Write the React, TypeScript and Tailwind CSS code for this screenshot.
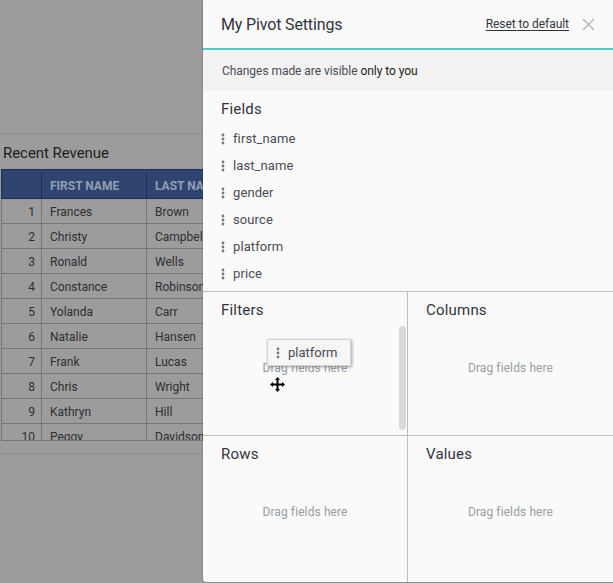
const ROWS = [
  ["1", "Frances", "Brown"],
  ["2", "Christy", "Campbell"],
  ["3", "Ronald", "Wells"],
  ["4", "Constance", "Robinson"],
  ["5", "Yolanda", "Carr"],
  ["6", "Natalie", "Hansen"],
  ["7", "Frank", "Lucas"],
  ["8", "Chris", "Wright"],
  ["9", "Kathryn", "Hill"],
  ["10", "Peggy", "Davidson"],
];

const FIELDS = ["first_name", "last_name", "gender", "source", "platform", "price"];

const Grip = () => (
  <svg width="4" height="12" viewBox="0 0 4 12" className="shrink-0 fill-[#77777f]">
    <circle cx="2" cy="2" r="1.4" />
    <circle cx="2" cy="6" r="1.4" />
    <circle cx="2" cy="10" r="1.4" />
  </svg>
);

const DropZone = ({ title, children, className = "", hintClass = "pb-[23px]" }: { title: string; children?: React.ReactNode; className?: string; hintClass?: string }) => (
  <div className={`relative flex flex-col px-[18px] pt-[8px] ${className}`}>
    <h3 className="text-[15px] leading-[20px] tracking-[0.2px] text-[#34343f]">{title}</h3>
    <div className={`flex flex-1 items-center justify-center text-[12px] tracking-[0.1px] text-[#9b9ba3] ${hintClass}`}>
      Drag fields here
    </div>
    {children}
  </div>
);

export default function App() {
  return (
    <div className="relative h-[583px] w-[613px] overflow-hidden bg-[#9c9c9c] font-['Roboto',sans-serif]">
      {/* Page behind the overlay */}
      <div className="flex h-full flex-col pt-[133px]">
        <div className="border-t border-[#8e8e8e]" />
        <h2 className="h-[35px] pl-[3px] pt-[9px] text-[15px] leading-[20px] tracking-[-0.05px] text-[#1e1e22]">Recent Revenue</h2>
        <div className="ml-[1px] h-[272px] w-[300px] overflow-hidden border-b border-[#767676]">
          <div className="flex h-[30px] border border-[#1c2f55] bg-[#2f4570] pt-[3px] text-[12px] font-bold text-[#929db3]">
            <div className="w-[40px] border-r border-[#1c2f55]" />
            <div className="flex w-[105px] items-center border-r border-[#1c2f55] pl-[8px]">FIRST NAME</div>
            <div className="flex flex-1 items-center pl-[8px]">LAST NAME</div>
          </div>
          {ROWS.map((r) => (
            <div key={r[0]} className="flex h-[25px] shrink-0 border-b border-l border-[#767676] text-[12px] text-[#2e2e32]">
              <div className="flex w-[40px] items-center justify-end border-r border-[#767676] pr-[6px] pt-[2px]">{r[0]}</div>
              <div className="flex w-[105px] items-center border-r border-[#767676] pl-[8px] pt-[2px]">{r[1]}</div>
              <div className="flex flex-1 items-center pl-[8px] pt-[2px]">{r[2]}</div>
            </div>
          ))}
        </div>
        <div className="mt-[12px] border-t border-[#8e8e8e]" />
      </div>

      {/* Settings drawer */}
      <aside className="absolute bottom-[1px] left-[203px] top-0 flex w-[410px] flex-col rounded-bl-[3px] bg-[#fafafa] shadow-[0_0_2px_rgba(0,0,0,0.4)]">
        <header className="flex h-[50px] shrink-0 items-center border-b-2 border-[#45d0c8] px-[18px] shadow-[0_2px_4px_rgba(0,0,0,0.08)]">
          <h1 className="pt-[2px] text-[16px] tracking-[-0.15px] text-[#34343f]">My Pivot Settings</h1>
          <span className="ml-auto text-[12px] tracking-[-0.05px] text-[#34343f] underline underline-offset-2">Reset to default</span>
          <svg width="13" height="13" viewBox="0 0 13 13" className="ml-[13px] stroke-[#b5b5b5]" strokeWidth="1.4" fill="none">
            <path d="M1 1l11 11M12 1L1 12" />
          </svg>
        </header>
        <div className="flex h-[41px] shrink-0 items-center bg-[#f3f3f3] pl-[19px] text-[12px] tracking-[-0.05px] text-[#4a4a54]">
          Changes made are visible&nbsp;<span className="text-[#1c1c22]">only to you</span>
        </div>
        <section className="h-[200px] shrink-0 px-[18px] pt-[8px]">
          <h3 className="text-[15px] leading-[20px] tracking-[0.2px] text-[#34343f]">Fields</h3>
          <ul className="mt-[6px]">
            {FIELDS.map((f) => (
              <li key={f} className="flex h-[27px] items-center gap-[8px] text-[13px] tracking-[0.1px] text-[#4a4a54]">
                <Grip />
                {f}
              </li>
            ))}
          </ul>
        </section>
        <div className="grid flex-1 grid-cols-[205px_1fr] grid-rows-[144px_1fr] border-t border-[#bdbdbd]">
          <DropZone title="Filters" hintClass="pb-[20px]" className="border-b border-r border-[#bdbdbd]">
            {/* scrollbar thumb */}
            <div className="absolute right-[1px] top-[34px] h-[104px] w-[7px] rounded-full bg-[#dadada]" />
            {/* field being dragged */}
            <div className="absolute left-[64px] top-[47px] flex h-[27px] w-[84px] items-center gap-[8px] border border-[#d4d4d4] bg-[#f6f6f6] pl-[8px] text-[13px] text-[#4a4a54] shadow-[1px_1px_3px_rgba(0,0,0,0.35)]">
              <Grip />
              platform
            </div>
            {/* move cursor */}
            <svg width="15" height="15" viewBox="0 0 15 15" className="absolute left-[67px] top-[85px]" fill="#000">
              <path d="M7.5 0L10 3H8.500v3.500H12V5l3 2.500L12 10V8.500H8.500V12H10l-2.500 3L5 12h1.500V8.500H3V10L0 7.500 3 5v1.500h3.500V3H5z" />
            </svg>
          </DropZone>
          <DropZone title="Columns" hintClass="pb-[20px]" className="border-b border-[#bdbdbd]" />
          <DropZone title="Rows" className="border-r border-[#bdbdbd]" />
          <DropZone title="Values" />
        </div>
      </aside>
    </div>
  );
}
